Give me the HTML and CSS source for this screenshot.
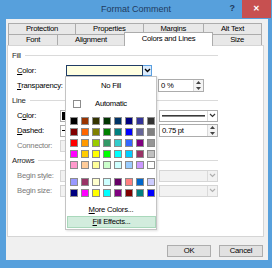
FILE: index.html
```html
<!DOCTYPE html>
<html lang="en">
<head>
    <meta charset="UTF-8">
    <meta name="viewport" content="width=device-width, initial-scale=1.0">
    <title>Format Comment</title>
    <link rel="stylesheet" href="styles.css">
</head>
<body>
    <div class="window">
        <div class="titlebar">
            <span></span>
            <span class="title">Format Comment</span>
            <div class="caption-buttons">
                <span class="help-button">?</span>
                <span class="close-button">&#x2715;</span>
            </div>
        </div>

        <div class="client">
            <div class="tabs">
                <div class="tab-row">
                    <div class="tab">Protection</div>
                    <div class="tab">Properties</div>
                    <div class="tab">Margins</div>
                    <div class="tab">Alt Text</div>
                </div>
                <div class="tab-row">
                    <div class="tab">Font</div>
                    <div class="tab">Alignment</div>
                    <div class="tab tab-selected">Colors and Lines</div>
                    <div class="tab">Size</div>
                </div>
            </div>

            <div class="page">
                <div class="group-head"><span>Fill</span><i class="rule"></i></div>
                <div class="form-row">
                    <span class="field-label fill-label"><u>C</u>olor:</span>
                    <div class="fill-combo">
                        <span class="fill-value"></span>
                        <span class="fill-arrow">
                            <svg width="7" height="5" viewBox="0 0 7 5"><path d="M1 1l2.5 2.5L6 1" fill="none" stroke="#000" stroke-width="1.4"/></svg>
                        </span>
                    </div>
                </div>
                <div class="form-row">
                    <span class="field-label"><u>T</u>ransparency:</span>
                    <div class="spin transparency-spin">
                        <span class="spin-text">0 %</span>
                        <span class="spin-buttons">
                            <svg width="5" height="3" viewBox="0 0 5 3"><path d="M0 3h5L2.5 0z" fill="#444"/></svg>
                            <svg width="5" height="3" viewBox="0 0 5 3"><path d="M0 0h5L2.5 3z" fill="#444"/></svg>
                        </span>
                    </div>
                </div>

                <div class="group-head"><span>Line</span><i class="rule"></i></div>
                <div class="form-row">
                    <span class="field-label">C<u>o</u>lor:</span>
                    <div class="combo combo-left">
                        <span class="swatch-value"></span>
                    </div>
                    <span class="field-label side-label"><u>S</u>tyle:</span>
                    <div class="combo combo-right">
                        <span class="line-sample"></span>
                        <span class="combo-arrow">
                            <svg width="7" height="5" viewBox="0 0 7 5"><path d="M1 1l2.5 2.5L6 1" fill="none" stroke="#333" stroke-width="1.2"/></svg>
                        </span>
                    </div>
                </div>
                <div class="form-row">
                    <span class="field-label"><u>D</u>ashed:</span>
                    <div class="combo combo-left">
                        <span class="dash-sample"></span>
                    </div>
                    <span class="field-label side-label"><u>W</u>eight:</span>
                    <div class="spin weight-spin">
                        <span class="spin-text">0.75 pt</span>
                        <span class="spin-buttons">
                            <svg width="5" height="3" viewBox="0 0 5 3"><path d="M0 3h5L2.5 0z" fill="#444"/></svg>
                            <svg width="5" height="3" viewBox="0 0 5 3"><path d="M0 0h5L2.5 3z" fill="#444"/></svg>
                        </span>
                    </div>
                </div>
                <div class="form-row">
                    <span class="field-label disabled">Connector:</span>
                    <div class="combo combo-left combo-disabled"></div>
                </div>

                <div class="group-head"><span>Arrows</span><i class="rule"></i></div>
                <div class="form-row">
                    <span class="field-label disabled">Begin style:</span>
                    <div class="combo combo-left combo-disabled"></div>
                    <span class="field-label side-label disabled">End style:</span>
                    <div class="combo combo-right combo-disabled">
                        <span class="combo-arrow">
                            <svg width="7" height="5" viewBox="0 0 7 5"><path d="M1 1l2.5 2.5L6 1" fill="none" stroke="#b0b0b0" stroke-width="1.2"/></svg>
                        </span>
                    </div>
                </div>
                <div class="form-row">
                    <span class="field-label disabled">Begin size:</span>
                    <div class="combo combo-left combo-disabled"></div>
                    <span class="field-label side-label disabled">End size:</span>
                    <div class="combo combo-right combo-disabled">
                        <span class="combo-arrow">
                            <svg width="7" height="5" viewBox="0 0 7 5"><path d="M1 1l2.5 2.5L6 1" fill="none" stroke="#b0b0b0" stroke-width="1.2"/></svg>
                        </span>
                    </div>
                </div>

                <!-- open colour dropdown -->
                <div class="color-popup">
                    <div class="popup-item">No Fill</div>
                    <div class="popup-item automatic">
                        <span class="auto-box"></span>
                        <span>Automatic</span>
                    </div>
                    <div class="swatch-grid">
                        <span class="swatch" style="background:#000000"></span>
                        <span class="swatch" style="background:#993300"></span>
                        <span class="swatch" style="background:#333300"></span>
                        <span class="swatch" style="background:#003300"></span>
                        <span class="swatch" style="background:#003366"></span>
                        <span class="swatch" style="background:#000080"></span>
                        <span class="swatch" style="background:#333399"></span>
                        <span class="swatch" style="background:#333333"></span>
                        <span class="swatch" style="background:#800000"></span>
                        <span class="swatch" style="background:#ff6600"></span>
                        <span class="swatch" style="background:#808000"></span>
                        <span class="swatch" style="background:#008000"></span>
                        <span class="swatch" style="background:#008080"></span>
                        <span class="swatch" style="background:#0000ff"></span>
                        <span class="swatch" style="background:#666699"></span>
                        <span class="swatch" style="background:#808080"></span>
                        <span class="swatch" style="background:#ff0000"></span>
                        <span class="swatch" style="background:#ff9900"></span>
                        <span class="swatch" style="background:#99cc00"></span>
                        <span class="swatch" style="background:#339966"></span>
                        <span class="swatch" style="background:#33cccc"></span>
                        <span class="swatch" style="background:#3366ff"></span>
                        <span class="swatch" style="background:#800080"></span>
                        <span class="swatch" style="background:#969696"></span>
                        <span class="swatch" style="background:#ff00ff"></span>
                        <span class="swatch" style="background:#ffcc00"></span>
                        <span class="swatch" style="background:#ffff00"></span>
                        <span class="swatch" style="background:#00ff00"></span>
                        <span class="swatch" style="background:#00ffff"></span>
                        <span class="swatch" style="background:#00ccff"></span>
                        <span class="swatch" style="background:#993366"></span>
                        <span class="swatch" style="background:#c0c0c0"></span>
                        <span class="swatch" style="background:#ff99cc"></span>
                        <span class="swatch" style="background:#ffcc99"></span>
                        <span class="swatch" style="background:#ffff99"></span>
                        <span class="swatch" style="background:#ccffcc"></span>
                        <span class="swatch" style="background:#ccffff"></span>
                        <span class="swatch" style="background:#99ccff"></span>
                        <span class="swatch" style="background:#cc99ff"></span>
                        <span class="swatch" style="background:#ffffff"></span>
                    </div>
                    <div class="swatch-grid chart-colors">
                        <span class="swatch" style="background:#9999ff"></span>
                        <span class="swatch" style="background:#993366"></span>
                        <span class="swatch" style="background:#ffffcc"></span>
                        <span class="swatch" style="background:#ccffff"></span>
                        <span class="swatch" style="background:#660066"></span>
                        <span class="swatch" style="background:#ff8080"></span>
                        <span class="swatch" style="background:#0066cc"></span>
                        <span class="swatch" style="background:#ccccff"></span>
                        <span class="swatch" style="background:#000080"></span>
                        <span class="swatch" style="background:#ff00ff"></span>
                        <span class="swatch" style="background:#ffff00"></span>
                        <span class="swatch" style="background:#00ffff"></span>
                        <span class="swatch" style="background:#800080"></span>
                        <span class="swatch" style="background:#800000"></span>
                        <span class="swatch" style="background:#008080"></span>
                        <span class="swatch" style="background:#0000ff"></span>
                    </div>
                    <div class="popup-link more-colors"><u>M</u>ore Colors...</div>
                    <div class="popup-link popup-hover"><u>F</u>ill Effects...</div>
                </div>
            </div>

            <div class="dialog-buttons">
                <button type="button" class="dlg-button">OK</button>
                <button type="button" class="dlg-button">Cancel</button>
            </div>
        </div>
    </div>
</body>
</html>
```

FILE: styles.css
```css
html, body {
    margin: 0;
    padding: 0;
}

body {
    font-family: "Liberation Sans", Arial, sans-serif;
    font-size: 7.7px;
    letter-spacing: -0.25px;
    color: #000;
}

.window {
    width: 272px;
    height: 268px;
    background-color: #57a0dc;
    display: flex;
    flex-direction: column;
}

/* title bar */
.titlebar {
    height: 19px;
    display: grid;
    grid-template-columns: 1fr auto 1fr;
    align-items: start;
}

.title {
    font-size: 9px;
    letter-spacing: 0;
    line-height: 18px;
    color: #1f3b5e;
}

.caption-buttons {
    justify-self: end;
    display: flex;
    margin-right: 1px;
}

.help-button {
    width: 20px;
    height: 17px;
    line-height: 17px;
    text-align: center;
    font-size: 9px;
    font-weight: bold;
    color: #1f3b5e;
}

.close-button {
    width: 29px;
    height: 18px;
    line-height: 18px;
    text-align: center;
    background-color: #c75050;
    color: #fff;
    font-size: 8px;
    font-weight: bold;
}

/* dialog body */
.client {
    flex: 1;
    margin: 0 4px 8px 6px;
    padding: 4px 4px 0 1px;
    background-color: #f0f0f0;
    display: flex;
    flex-direction: column;
}

.tabs {
    margin: 0 2px 0 1px;
}

.tab-row {
    display: flex;
    height: 11px;
}

.tab {
    flex: 1 1 auto;
    box-sizing: border-box;
    height: 11px;
    border: 1px solid #acacac;
    border-bottom: none;
    background-color: #e8e8e8;
    text-align: center;
    line-height: 10px;
    white-space: nowrap;
}

.tab + .tab {
    margin-left: -1px;
}

.tab-selected {
    position: relative;
    z-index: 2;
    height: 14px;
    margin-top: -2px;
    background-color: #fff;
    line-height: 12px;
}

.page {
    position: relative;
    box-sizing: border-box;
    height: 192px;
    border: 1px solid #d5d5d5;
    background-color: #fff;
    padding: 2px 45px 0 4px;
    display: grid;
    grid-auto-rows: 15px;
    align-content: start;
}

.group-head {
    display: flex;
    align-items: center;
    color: #1e1e1e;
}

.rule {
    flex: 1;
    height: 1px;
    margin-left: 4px;
    background-color: #dadada;
}

.form-row {
    display: flex;
    align-items: center;
    padding-left: 5px;
}

.field-label {
    width: 43px;
    white-space: nowrap;
}

.fill-label {
    width: 49px;
}

.disabled {
    color: #7a7a7a;
}

.side-label {
    width: 35px;
    margin-left: 4px;
}

/* fill colour box, focused */
.fill-combo {
    display: flex;
    height: 11px;
}

.fill-value {
    width: 75px;
    border: 1px solid #213d66;
    background-color: #ffffe1;
}

.fill-arrow {
    width: 8px;
    display: flex;
    align-items: center;
    justify-content: center;
    border: 1px solid #5a9fe0;
    border-left: none;
    background-color: #dcecfc;
}

.combo {
    box-sizing: border-box;
    height: 12px;
    border: 1px solid #acacac;
    background-color: #fff;
    display: flex;
    align-items: center;
}

.combo-left {
    width: 60px;
    padding-left: 1px;
}

.combo-right {
    width: 59px;
    margin-left: auto;
    padding-left: 2px;
}

.combo-disabled {
    background-color: #f2f2f2;
    border-color: #d6d6d6;
}

.combo-arrow {
    margin-left: auto;
    width: 9px;
    height: 10px;
    display: flex;
    align-items: center;
    justify-content: center;
    border-left: 1px solid #dadada;
}

.swatch-value {
    width: 5px;
    height: 8px;
    background-color: #000;
}

.dash-sample {
    width: 40px;
    height: 1px;
    background-color: #000;
}

.line-sample {
    flex: 1;
    height: 1px;
    margin-right: 2px;
    background-color: #3a3a3a;
    border-bottom: 1px solid #8a8a8a;
}

.spin {
    box-sizing: border-box;
    height: 13px;
    border: 1px solid #acacac;
    background-color: #fff;
    display: flex;
    align-items: center;
}

.transparency-spin {
    width: 46px;
    margin-left: 98px;
}

.weight-spin {
    width: 59px;
    margin-left: auto;
}

.spin-text {
    padding-left: 2px;
}

.spin-buttons {
    margin-left: auto;
    width: 9px;
    height: 11px;
    display: flex;
    flex-direction: column;
    align-items: center;
    justify-content: space-around;
    border-left: 1px solid #dadada;
    background-color: #f4f4f4;
}

/* colour dropdown */
.color-popup {
    position: absolute;
    left: 57px;
    top: 30px;
    z-index: 3;
    box-sizing: border-box;
    width: 92px;
    height: 154px;
    border: 1px solid #c4c4c4;
    background-color: #fff;
    box-shadow: 1px 1px 2px rgba(0, 0, 0, 0.12);
    display: flex;
    flex-direction: column;
}

.popup-item {
    height: 18px;
    line-height: 18px;
    text-align: center;
}

.automatic {
    display: flex;
    align-items: center;
    text-align: left;
    padding-left: 7px;
}

.auto-box {
    box-sizing: border-box;
    width: 8px;
    height: 8px;
    border: 1px solid #8c8c8c;
    margin-right: 14px;
}

.swatch-grid {
    display: grid;
    grid-template-columns: repeat(8, 8px);
    grid-auto-rows: 8px;
    gap: 3px;
    margin: 4px 0 0 4px;
}

.chart-colors {
    margin-top: 9px;
}

.swatch {
    box-sizing: border-box;
    border: 1px solid #8c8c8c;
}

.popup-link {
    height: 12px;
    line-height: 12px;
    text-align: center;
}

.more-colors {
    margin-top: 7px;
}

.popup-hover {
    box-sizing: border-box;
    margin: 0 0 0 1px;
    width: 89px;
    background-color: #d2ecdd;
    border: 1px solid #a9d8bb;
    line-height: 10px;
}

.dialog-buttons {
    display: flex;
    justify-content: flex-end;
    gap: 8px;
    margin: 8px 1px 0 0;
}

.dlg-button {
    box-sizing: border-box;
    width: 44px;
    height: 12px;
    padding: 0;
    border: 1px solid #adadad;
    background-color: #e1e1e1;
    font-family: "Liberation Sans", Arial, sans-serif;
    font-size: 7.7px;
    letter-spacing: -0.25px;
    line-height: 10px;
    color: #000;
}
```
